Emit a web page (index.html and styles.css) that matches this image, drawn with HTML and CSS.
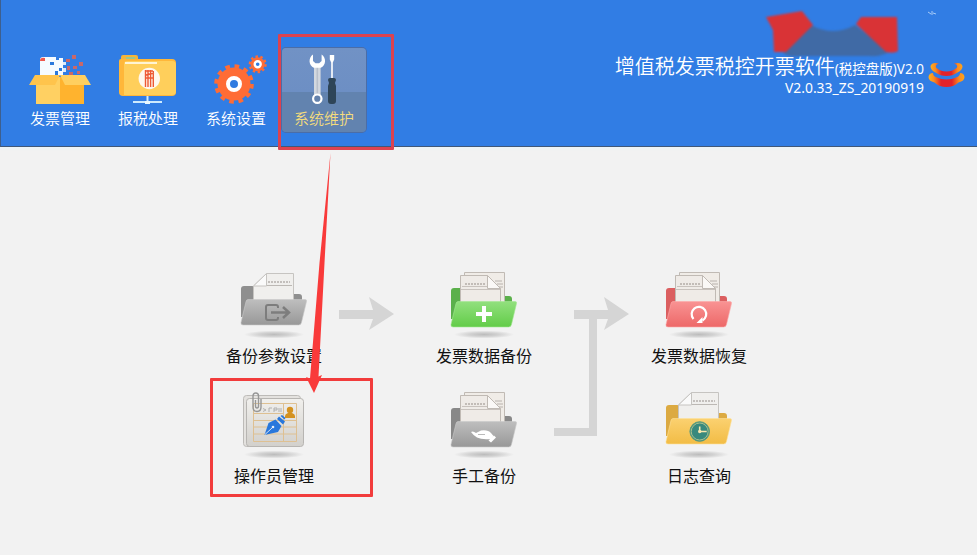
FILE: index.html
```html
<!DOCTYPE html>
<html lang="zh-CN">
<head>
<meta charset="UTF-8" />
<meta name="viewport" content="width=device-width, initial-scale=1.0"/>
<title>增值税发票税控开票软件</title>
<link rel="stylesheet" href="styles.css">
</head>
<body>
<header class="header">
  <nav class="nav">
    <a class="nav-item">
      <svg class="nav-icon" viewBox="0 0 84 60">
        <path d="M22 12q0-3 3-3h13v3h3v-2h4v17H22z" fill="#f6fbff"/>
        <path d="M22 13q0-4 5-3v3z" fill="#f0584c"/>
        <path d="M32 14h4v3h-4zM41 20h3v3h-3zM37 23h3v4h-3z" fill="#2b79dc"/>
        <path d="M45 14h3v3h-3zM45 20h3v4h-3z" fill="#dceafa"/>
        <path d="M54 7h4v4h-4zM48 11h4v3h-4zM61 14h4v4h-4zM55 18h4v3h-4zM49 18h3v4h-3zM51 24h4v3h-4zM59 23h3v3h-3z" fill="#c8686a"/>
        <path d="M18 29h24v27H18z" fill="#ffd062"/>
        <path d="M42 29h24v27H42z" fill="#ffb32e"/>
        <path d="M17 27h25l-5 10H11z" fill="#ffc44c"/>
        <path d="M42 27h25l6 10H47z" fill="#ffcf5f"/>
      </svg>
      <span class="nav-label">发票管理</span>
    </a>
    <a class="nav-item">
      <svg class="nav-icon" viewBox="0 0 84 60">
        <path d="M15 9q0-2 2-2h13q2 0 2 2v8H15z" fill="#f4b53c"/>
        <path d="M20 9h9v2h-9z" fill="#9fc78c"/>
        <path d="M13 13q0-2 2-2h51q4 0 4 4v29q0 4-4 4H17q-4 0-4-4z" fill="#ffb73a"/>
        <path d="M18 16q0-3 3-3h45q4 0 4 4v26q0 4-4 4H18z" fill="#ffcf5b"/>
        <path d="M19 14h32v2H19z" fill="#fff4d4"/>
        <circle cx="43.3" cy="30.5" r="10.7" fill="#fff8ee"/>
        <path d="M39.500 22v17M42 22v17M44.600 22v17M47.300 23v16M39 23h8M40 27l8-2M39 30h9" stroke="#ee5a35" stroke-width="1.400" fill="none"/>
        <path d="M41.500 48v7M27 54h29" stroke="#cdeafd" stroke-width="2"/>
        <path d="M39 53h5v3h-5z" fill="#e9f8ff"/>
      </svg>
      <span class="nav-label">报税处理</span>
    </a>
    <a class="nav-item">
      <svg class="nav-icon" viewBox="0 0 84 60">
        <circle cx="40" cy="36" r="16.5" fill="#ff6c35"/>
        <circle cx="40" cy="36" r="17.8" fill="none" stroke="#ff6c35" stroke-width="4" stroke-dasharray="4.66 4.66"/>
        <circle cx="40" cy="36" r="6" fill="#2f7be0" stroke="#fff" stroke-width="4"/>
        <circle cx="63.7" cy="16.3" r="7" fill="#ff6c35"/>
        <circle cx="63.7" cy="16.3" r="7.8" fill="none" stroke="#ff6c35" stroke-width="2.4" stroke-dasharray="2.45 2.45"/>
        <circle cx="63.7" cy="16.3" r="3" fill="#2f7be0" stroke="#fff" stroke-width="2.4"/>
      </svg>
      <span class="nav-label">系统设置</span>
    </a>
    <a class="nav-item active">
      <svg class="nav-icon" viewBox="0 0 84 60">
        <path d="M32 18h6.600v29H32z" fill="#d3d8df"/>
        <path d="M34.500 19h1.600v27h-1.600z" fill="#b9c0cb"/>
        <path d="M31 6.500a7.700 7.700 0 0 0 .8 13.300h7a7.700 7.700 0 0 0 .8-13.300V13l-2.500 2.300h-3.600L31 13z" fill="#fff"/>
        <circle cx="35.3" cy="50.700" r="4.200" fill="#6482ac" stroke="#fff" stroke-width="2.200"/>
        <path d="M47.800 7h4.400v4.500l-1.400 3V32h-1.600V14.500l-1.400-3z" fill="#fff"/>
        <path d="M46 32q0-2 2-2h4q2 0 2 2l-1 3 1 3v15q0 3-3 3h-2q-3 0-3-3V38l1-3z" fill="#2e4558"/>
      </svg>
      <span class="nav-label">系统维护</span>
    </a>
  </nav>
  <svg class="ribbon" viewBox="0 0 150 62">
    <path d="M52 25q22 12 44 0l34 27q-8 5-20 4H40q-10 1-16-3z" fill="#406aa5"/>
    <path d="M7 17l36-6 11 14-27 27H15l-1-22z" fill="#d93336"/>
    <path d="M102 17h36l1 34q-4 3-12 1L97 24z" fill="#d93336"/>
  </svg>
  <svg class="sparkle" viewBox="0 0 10 8">
    <path d="M1 3l3 2M5 2v4M6 4l3 1" stroke="#a9cdf8" stroke-width="1"/>
  </svg>
  <div class="brand">
    <div class="brand-text">
      <div class="title">增值税发票税控开票软件<small>(税控盘版)V2.0</small></div>
      <div class="version">V2.0.33_ZS_20190919</div>
    </div>
    <svg class="logo" viewBox="0 0 40 30">
      <defs>
        <linearGradient id="flame">
          <stop offset="0" stop-color="#ffb01d"/>
          <stop offset=".15" stop-color="#fb8c1e"/>
          <stop offset=".35" stop-color="#e3222a"/>
          <stop offset=".65" stop-color="#e3222a"/>
          <stop offset=".85" stop-color="#fb8c1e"/>
          <stop offset="1" stop-color="#ffa51c"/>
        </linearGradient>
      </defs>
      <path d="M12 2.500Q5 .500 3.500 5q0 4 5 6.500 5 3.500 11 3.500t11-3.500q5-2.500 5-6.500Q34 .500 27 2.500q4 1 3 4-4 4-10.500 4T9 6.500q-1-3 3-4z" fill="url(#flame)"/>
      <path d="M6 12q-4 0-4.500 4 0 4 6 5.500 5 4.500 12 4.500t12-4.500q6-1.500 6-5.500-.5-4-4.500-4 0 3-4 4.500-4 2-9.500 2t-9.500-2Q6 15 6 12z" fill="url(#flame)"/>
    </svg>
  </div>
</header>

<main class="main">
  <!-- shared folder pieces -->
  <svg class="defs" width="0" height="0">
    <defs>
      <linearGradient id="gray" x2="0" y2="1"><stop offset="0" stop-color="#bebebe"/><stop offset="1" stop-color="#989898"/></linearGradient>
      <linearGradient id="green" x2="0" y2="1"><stop offset="0" stop-color="#92e07e"/><stop offset="1" stop-color="#62cc48"/></linearGradient>
      <linearGradient id="red" x2="0" y2="1"><stop offset="0" stop-color="#f99393"/><stop offset="1" stop-color="#ed6868"/></linearGradient>
      <linearGradient id="yellow" x2="0" y2="1"><stop offset="0" stop-color="#fbd170"/><stop offset="1" stop-color="#f2bc45"/></linearGradient>
      <linearGradient id="card" x2="0" y2="1"><stop offset="0" stop-color="#f1f0ed"/><stop offset="1" stop-color="#d2d0cc"/></linearGradient>
      <radialGradient id="shade"><stop offset="0" stop-color="#bcbcbc"/><stop offset=".5" stop-color="#d2d2d2"/><stop offset="1" stop-color="#f2f2f2"/></radialGradient>
      <g id="page">
        <path d="M27.500 18L40.500 5.500h27V40h-40z" fill="#f0efed" stroke="#c6c4c1"/>
        <path d="M27.500 18h13V5.500z" fill="#fafafa" stroke="#c6c4c1"/>
        <path d="M42 14h22" stroke="#b4b0ac" stroke-width="1.300" stroke-dasharray="2 1"/>
        <path d="M41 17.500h25" stroke="#bcb8b4"/>
      </g>
      <g id="pages">
        <path d="M28.500 4.500h40V36h-40z" fill="#f0ece7" stroke="#c0bab4"/>
        <path d="M59 13h7M61 16h6M63 19h4" stroke="#b8b2ad"/>
        <path d="M24.500 7.500h27l13 13V36h-40z" fill="#efebe7" stroke="#c0bab4"/>
        <path d="M51.500 7.500v13h13z" fill="#faf8f6" stroke="#c0bab4"/>
        <path d="M29 16h21" stroke="#b4ada8" stroke-width="1.300" stroke-dasharray="2 1"/>
        <path d="M26 18.500h25M25 21.500h39" stroke="#c8c2bd"/>
      </g>
      <path id="back" d="M15 23q0-3 3-3h8q3 0 3 3v5h44q3 0 3 3v20H15z"/>
      <path id="front" d="M22 33.500h57q2 0 1.500 2l-5 21q-.5 2.500-3 2.500H17q-2.500 0-2-2.500l5-21q.5-2 2-2z"/>
      <ellipse id="shadow" cx="48" cy="66.500" rx="30" ry="4" fill="url(#shade)"/>
    </defs>
  </svg>

  <div class="flow">
    <div class="step">
      <svg class="step-icon" viewBox="0 0 96 72">
        <use href="#shadow"/>
        <use href="#back" y="-2" fill="#8f8f8f"/>
        <use href="#page"/>
        <use href="#front" y="-2" fill="url(#gray)" stroke="#c9c9c9" stroke-width=".6"/>
        <path d="M52 40v-1q0-2-2-2h-8q-2 0-2 2v11q0 2 2 2h8q2 0 2-2v-1" fill="none" stroke="#7d7d7d" stroke-width="2"/>
        <path d="M45 44.500h17M57 39l6 5.500-6 5.500" fill="none" stroke="#7d7d7d" stroke-width="2.500"/>
      </svg>
      <div class="step-label">备份参数设置</div>
    </div>
    <svg class="link" viewBox="0 0 114 100">
      <path d="M17 42h34l-4-13 25 17-25 16 4-11H17z"/>
    </svg>
    <div class="step">
      <svg class="step-icon" viewBox="0 0 96 72">
        <use href="#shadow"/>
        <use href="#back" fill="#5bb04b"/>
        <use href="#pages"/>
        <use href="#front" fill="url(#green)" stroke="#a2e792" stroke-width=".6"/>
        <path d="M48 38v16M40 46h16" stroke="#fff" stroke-width="4"/>
      </svg>
      <div class="step-label">发票数据备份</div>
    </div>
    <svg class="link link-tall" viewBox="0 0 119 220">
      <path d="M42 42h34l-4-13 25 17-25 16 4-11H65v117H22v-8h35V51H42z"/>
    </svg>
    <div class="step">
      <svg class="step-icon" viewBox="0 0 96 72">
        <use href="#shadow"/>
        <use href="#back" fill="#db5f60"/>
        <use href="#pages"/>
        <use href="#front" fill="url(#red)" stroke="#fbaaaa" stroke-width=".6"/>
        <path d="M42.500 51a7.300 7.300 0 1 1 9 1.500" fill="none" stroke="#fff" stroke-width="2.200"/>
        <path d="M51.500 49v6h-6z" fill="#fff"/>
      </svg>
      <div class="step-label">发票数据恢复</div>
    </div>

    <div class="step operator">
      <svg class="step-icon" viewBox="0 0 96 72">
        <use href="#shadow"/>
        <rect x="17.500" y="7.500" width="57" height="51" rx="3" fill="#e4e2df" stroke="#bdbbb8"/>
        <rect x="20.500" y="10.500" width="57" height="48" rx="3" fill="url(#card)" stroke="#b7b5b2"/>
        <path d="M27.500 15.500h43v38h-43zM57.500 15.500v38M27.500 25.500h30M27.500 32.500h43M27.500 39h43M27.500 46h43" fill="none" stroke="#dec092"/>
        <path d="M37 20.500l3 1.500-3 1.500M43 24v-4h3M48 24v-4h3v2h-3M53 20v4M55 20v4" fill="none" stroke="#aaa" stroke-width=".9"/>
        <circle cx="64" cy="22" r="3.200" fill="#d49220"/>
        <path d="M59 30v-2q0-2 3-3h4q3 1 3 3v2z" fill="#d49220"/>
        <path d="M38.500 47l4-12 7-3.500 6 6.500-3.500 6z" fill="#2877dc"/>
        <path d="M51 31l2-2.500 6 5-2 3zM54.500 28l1.500-1 3.500 3-1 1.500z" fill="#2877dc"/>
        <path d="M39 46.500l7-6.500" stroke="#e8eef8" stroke-width=".9"/>
        <circle cx="47" cy="39" r="1.300" fill="#e8eef8"/>
        <path d="M29.500 12v6q0 2 1.500 2t1.500-2V8q0-3-2.700-3T27 8v11q0 4.500 4 4.500t4-4.500v-8" fill="none" stroke="#969696" stroke-width="1.400"/>
      </svg>
      <div class="step-label">操作员管理</div>
    </div>
    <div class="step manual">
      <svg class="step-icon" viewBox="0 0 96 72">
        <use href="#shadow"/>
        <use href="#back" fill="#888"/>
        <use href="#pages"/>
        <use href="#front" fill="url(#gray)" stroke="#c9c9c9" stroke-width=".6"/>
        <path d="M35 44q2-1.500 5 1l5-2.500q7-1 10 2.500l2.500 3-2.500 3q-9 1-14-1.500-3.500-2-6-5.500z" fill="#fff"/>
        <path d="M42 46.500h7" stroke="#aaa" stroke-width=".8"/>
        <path d="M58 47.500l2 2-5 5-2.500-2z" fill="#fff"/>
      </svg>
      <div class="step-label">手工备份</div>
    </div>
    <div class="step log">
      <svg class="step-icon" viewBox="0 0 96 72">
        <use href="#shadow"/>
        <use href="#back" y="-3" fill="#dcaa42"/>
        <use href="#page" y="-1"/>
        <use href="#front" y="-3" fill="url(#yellow)" stroke="#fde09a" stroke-width=".6"/>
        <circle cx="48.700" cy="43.500" r="9.800" fill="#38897d" stroke="#5b9c7c"/>
        <circle cx="48.700" cy="43.500" r="8.500" fill="none" stroke="#c8cf93" stroke-width=".8"/>
        <path d="M48.700 38.500v5h7" fill="none" stroke="#f8e6ad" stroke-width="1.600"/>
        <circle cx="48.700" cy="43.500" r="1.700" fill="#f8e6ad"/>
      </svg>
      <div class="step-label">日志查询</div>
    </div>
  </div>
</main>

<!-- red guide marks over the page -->
<div class="mark mark-tab"></div>
<div class="mark mark-operator"></div>
<svg class="mark-arrow" viewBox="0 0 30 244">
  <path d="M25.500 3L19.500 113l-6 113.500 3.500-1.500-8 18-8-16 4 1.500L14.500 113z" fill="#f93a3a"/>
</svg>
</body>
</html>
```

FILE: styles.css
```css
body {
  font-family: "Noto Sans CJK SC", sans-serif;
  background: #f2f2f2;
  margin: 0;
  height: 555px;
  position: relative;
  overflow: hidden;
}

.header {
  position: relative;
  box-sizing: border-box;
  height: 147px;
  display: flex;
  justify-content: space-between;
  align-items: flex-start;
  padding: 48px 10px 0 17px;
  background: #317de4;
  border-left: 1px solid #3d5f8e;
  border-bottom: 1px solid #405878;
  box-shadow: 0 1px 3px #e8f6fa;
}

.nav {
  display: flex;
  gap: 4px;
}

.nav-item {
  width: 84px;
  height: 84px;
  border-radius: 4px;
  text-align: center;
}

.nav-item.active {
  background: linear-gradient(#7192c5 0, #6d8fc4 44px, #6283af 44px, #6283af 100%);
  box-shadow: 0 0 0 1px #4b6da7;
}

.nav-icon {
  display: block;
  width: 84px;
  height: 60px;
}

.nav-label {
  display: block;
  font-size: 15px;
  line-height: 20px;
  font-weight: 350;
  color: #fff;
}

.active .nav-label {
  color: #f4dc7c;
}

.ribbon {
  position: absolute;
  left: 758px;
  top: 0;
  width: 150px;
  height: 62px;
  filter: blur(1px);
}

.sparkle {
  position: absolute;
  left: 926px;
  top: 9px;
  width: 10px;
  height: 8px;
}

.brand {
  position: relative;
  display: flex;
  gap: 3px;
  padding-top: 4px;
  color: #fff;
  font-weight: 350;
  white-space: nowrap;
}

.brand-text {
  text-align: right;
}

.title {
  font-size: 20px;
  line-height: 28px;
}

.title small {
  font-family: "Noto Sans", "Noto Sans CJK SC", sans-serif;
  font-size: 13.5px;
  font-weight: 400;
}

.version {
  margin-top: -4px;
  font-family: "Noto Sans", sans-serif;
  font-size: 13.9px;
  font-weight: 400;
  line-height: 18px;
}

.logo {
  width: 40px;
  height: 30px;
  margin-top: 9px;
}

.defs {
  position: absolute;
}

.main {
  padding: 121px 0 0 226px;
}

.flow {
  display: grid;
  grid-template-columns: 96px 114px 96px 119px 96px;
  grid-template-rows: 100px 100px;
  row-gap: 20px;
}

.step-icon {
  display: block;
  width: 96px;
  height: 72px;
}

.step-label {
  margin-top: 3px;
  font-size: 16px;
  line-height: 24px;
  text-align: center;
  white-space: nowrap;
  color: #111;
}

.link {
  width: 100%;
  height: 100px;
  fill: #d5d5d5;
}

.link-tall {
  grid-column: 4;
  grid-row: 1 / 3;
  height: 220px;
}

.operator {
  grid-column: 1;
  grid-row: 2;
}

.manual {
  grid-column: 3;
  grid-row: 2;
}

.log {
  grid-column: 5;
  grid-row: 2;
}

.mark {
  position: absolute;
  box-sizing: border-box;
  border: 3px solid #f23c3c;
  border-radius: 1px;
}

.mark-tab {
  left: 278px;
  top: 34px;
  width: 116px;
  height: 116px;
  border-color: #dc4350;
}

.mark-operator {
  left: 210px;
  top: 378px;
  width: 163px;
  height: 119px;
}

.mark-arrow {
  position: absolute;
  left: 305px;
  top: 150px;
  width: 30px;
  height: 244px;
}
```
